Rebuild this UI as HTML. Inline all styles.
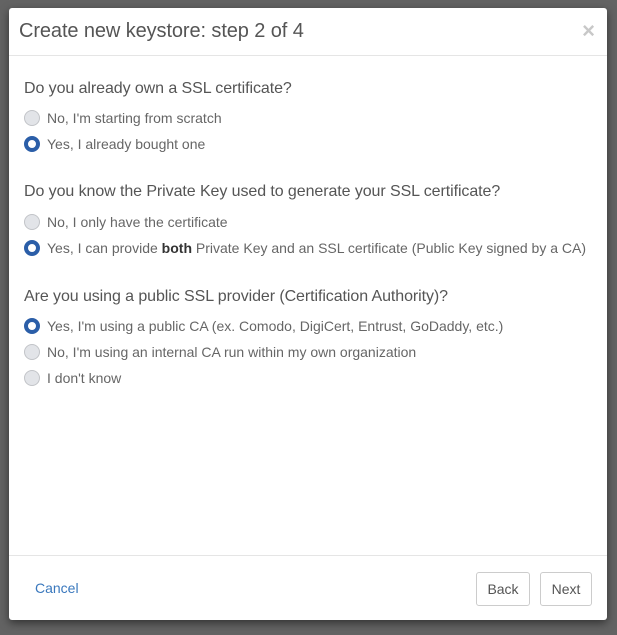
<!DOCTYPE html>
<html><head><meta charset="utf-8"><style>
*{box-sizing:border-box;margin:0;padding:0}
html,body{width:617px;height:635px;overflow:hidden;background:#636363;font-family:"Liberation Sans",sans-serif}
.modal{position:absolute;left:9px;top:8px;width:598px;height:612px;background:#fff;border-radius:3px;box-shadow:0 3px 9px rgba(0,0,0,.5)}
.hdr{height:48px;border-bottom:1px solid #e5e5e5;position:relative}
.hdr h1{position:absolute;left:10px;top:12px;font-size:20px;font-weight:normal;color:#555;letter-spacing:-0.1px}
.close{position:absolute;right:12px;top:10px;font-size:22px;font-weight:bold;color:#c8c8c8}
h2{position:absolute;left:15px;font-size:16px;font-weight:normal;color:#555;letter-spacing:-0.08px}
.r{position:absolute;left:15px;font-size:14px;color:#666;height:20px;line-height:20px;white-space:nowrap}
.r i{position:absolute;left:0;top:2px;width:16px;height:16px;border-radius:50%;background:#e2e4e8;border:1px solid #c2c4c8}
.r.on i{background:#fff;border:4.5px solid #2b5ea8}
.r span{padding-left:23px}
.ftr{position:absolute;left:0;right:0;top:547px;border-top:1px solid #e5e5e5}
.cancel{position:absolute;left:26px;top:572px;font-size:14px;color:#3a78bd}
.btn{position:absolute;top:564px;height:34px;border:1px solid #ccc;border-radius:3px;font-size:14px;color:#555;line-height:32px;text-align:center}
</style></head><body>
<div class="modal">
<div class="hdr"><h1>Create new keystore: step 2 of 4</h1><div class="close">×</div></div>
<h2 style="top:72px">Do you already own a SSL certificate?</h2>
<div class="r" style="top:100px"><i></i><span>No, I'm starting from scratch</span></div>
<div class="r on" style="top:126px"><i></i><span>Yes, I already bought one</span></div>
<h2 style="top:175px">Do you know the Private Key used to generate your SSL certificate?</h2>
<div class="r" style="top:204px"><i></i><span>No, I only have the certificate</span></div>
<div class="r on" style="top:230px"><i></i><span>Yes, I can provide <b style="color:#333">both</b> Private Key and an SSL certificate (Public Key signed by a CA)</span></div>
<h2 style="top:280px">Are you using a public SSL provider (Certification Authority)?</h2>
<div class="r on" style="top:308px"><i></i><span>Yes, I'm using a public CA (ex. Comodo, DigiCert, Entrust, GoDaddy, etc.)</span></div>
<div class="r" style="top:334px"><i></i><span>No, I'm using an internal CA run within my own organization</span></div>
<div class="r" style="top:360px"><i></i><span>I don't know</span></div>
<div class="ftr"></div>
<div class="cancel">Cancel</div>
<div class="btn" style="left:467px;width:54px">Back</div>
<div class="btn" style="left:531px;width:52px">Next</div>
</div>
</body></html>
